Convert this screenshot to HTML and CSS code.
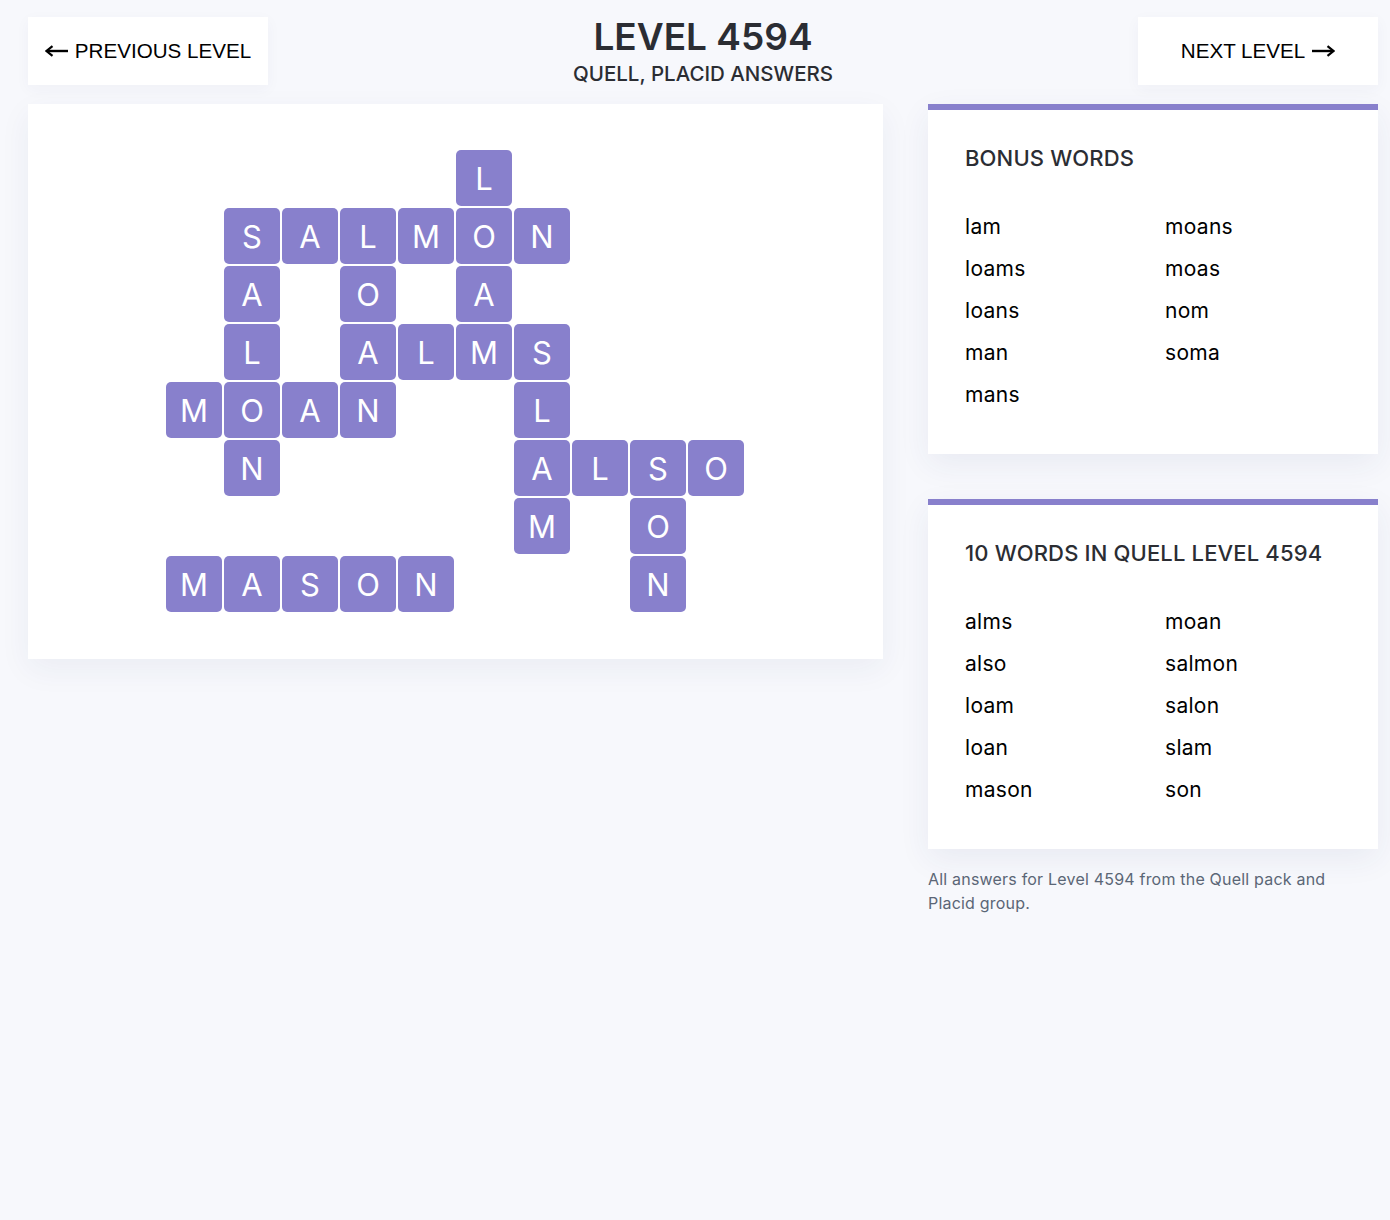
FILE: index.html
```html
<!DOCTYPE html>
<html lang="en">
<head>
<meta charset="utf-8">
<title>Level 4594 - Quell, Placid Answers</title>
<link rel="stylesheet" href="styles.css">
</head>
<body>
<div class="page">
  <header class="top">
    <a class="nav-btn" href="#">
      <svg class="arrow" width="23" height="12" viewBox="0 0 23 12" aria-hidden="true"><path d="M3 6H23" stroke="#000" stroke-width="2.4"/><path d="M7.5 1.2L1.5 6L7.5 10.8" fill="none" stroke="#000" stroke-width="2.2"/></svg>
      <span>PREVIOUS LEVEL</span>
    </a>
    <div class="title-block">
      <h1 class="title">LEVEL 4594</h1>
      <div class="subtitle">QUELL, PLACID ANSWERS</div>
    </div>
    <a class="nav-btn" href="#">
      <span>NEXT LEVEL</span>
      <svg class="arrow" width="23" height="12" viewBox="0 0 23 12" aria-hidden="true"><path d="M0 6H20" stroke="#000" stroke-width="2.4"/><path d="M15.5 1.2L21.5 6L15.5 10.8" fill="none" stroke="#000" stroke-width="2.2"/></svg>
    </a>
  </header>

  <main class="content">
    <section class="board-card">
      <div class="board">
        <div class="tile" style="grid-area:1/6">L</div>

        <div class="tile" style="grid-area:2/2">S</div>
        <div class="tile" style="grid-area:2/3">A</div>
        <div class="tile" style="grid-area:2/4">L</div>
        <div class="tile" style="grid-area:2/5">M</div>
        <div class="tile" style="grid-area:2/6">O</div>
        <div class="tile" style="grid-area:2/7">N</div>

        <div class="tile" style="grid-area:3/2">A</div>
        <div class="tile" style="grid-area:3/4">O</div>
        <div class="tile" style="grid-area:3/6">A</div>

        <div class="tile" style="grid-area:4/2">L</div>
        <div class="tile" style="grid-area:4/4">A</div>
        <div class="tile" style="grid-area:4/5">L</div>
        <div class="tile" style="grid-area:4/6">M</div>
        <div class="tile" style="grid-area:4/7">S</div>

        <div class="tile" style="grid-area:5/1">M</div>
        <div class="tile" style="grid-area:5/2">O</div>
        <div class="tile" style="grid-area:5/3">A</div>
        <div class="tile" style="grid-area:5/4">N</div>
        <div class="tile" style="grid-area:5/7">L</div>

        <div class="tile" style="grid-area:6/2">N</div>
        <div class="tile" style="grid-area:6/7">A</div>
        <div class="tile" style="grid-area:6/8">L</div>
        <div class="tile" style="grid-area:6/9">S</div>
        <div class="tile" style="grid-area:6/10">O</div>

        <div class="tile" style="grid-area:7/7">M</div>
        <div class="tile" style="grid-area:7/9">O</div>

        <div class="tile" style="grid-area:8/1">M</div>
        <div class="tile" style="grid-area:8/2">A</div>
        <div class="tile" style="grid-area:8/3">S</div>
        <div class="tile" style="grid-area:8/4">O</div>
        <div class="tile" style="grid-area:8/5">N</div>
        <div class="tile" style="grid-area:8/9">N</div>
      </div>
    </section>

    <aside class="sidebar">
      <section class="word-card">
        <h2 class="card-title">BONUS WORDS</h2>
        <ul class="word-list">
          <li>lam</li>
          <li>loams</li>
          <li>loans</li>
          <li>man</li>
          <li>mans</li>
          <li>moans</li>
          <li>moas</li>
          <li>nom</li>
          <li>soma</li>
        </ul>
      </section>
      <section class="word-card">
        <h2 class="card-title">10 WORDS IN QUELL LEVEL 4594</h2>
        <ul class="word-list">
          <li>alms</li>
          <li>also</li>
          <li>loam</li>
          <li>loan</li>
          <li>mason</li>
          <li>moan</li>
          <li>salmon</li>
          <li>salon</li>
          <li>slam</li>
          <li>son</li>
        </ul>
      </section>
      <p class="note">All answers for Level 4594 from the Quell pack and Placid group.</p>
    </aside>
  </main>
</div>
</body>
</html>
```

FILE: styles.css
```css
* {
  box-sizing: border-box;
}

html, body {
  margin: 0;
  padding: 0;
}

body {
  background: #f7f8fc;
  font-family: Inter, "Noto Sans", "Liberation Sans", sans-serif;
  color: #2b2d33;
}

.page {
  padding: 17px 12px 40px 28px;
}

.top {
  display: flex;
  align-items: center;
  justify-content: space-between;
  height: 68px;
  margin-bottom: 19px;
}

.nav-btn {
  width: 240px;
  height: 68px;
  background: #fff;
  display: flex;
  align-items: center;
  justify-content: center;
  gap: 7px;
  font-family: "Liberation Sans", Arial, sans-serif;
  font-size: 20.6px;
  color: #000;
  text-decoration: none;
  box-shadow: 0 4px 14px rgba(40, 50, 100, 0.04);
}

.arrow {
  display: block;
  flex: none;
}

.title-block {
  text-align: center;
  margin-top: -2px;
}

.title {
  margin: 0;
  font-size: 37px;
  line-height: 43px;
  font-weight: 600;
  color: #2b2d33;
}

.subtitle {
  margin-top: 4px;
  font-size: 20.5px;
  line-height: 24px;
  font-weight: 500;
  color: #2b2d33;
}

.content {
  display: grid;
  grid-template-columns: 1fr 450px;
  gap: 45px;
  align-items: start;
}

.board-card {
  background: #fff;
  height: 555px;
  padding: 0 1px 1px 0;
  display: flex;
  justify-content: center;
  align-items: center;
  box-shadow: 0 10px 30px rgba(40, 55, 110, 0.06);
}

.board {
  display: grid;
  grid-template-columns: repeat(10, 56px);
  grid-template-rows: repeat(8, 56px);
  gap: 2px;
}

.tile {
  background: #8880cc;
  border-radius: 5px;
  color: #fff;
  display: flex;
  align-items: center;
  justify-content: center;
  font-size: 31px;
  font-weight: 400;
}

.sidebar {
  display: flex;
  flex-direction: column;
}

.word-card {
  background: #fff;
  border-top: 6px solid #8880cc;
  height: 350px;
  padding: 34px 37px 0;
  margin-bottom: 45px;
  box-shadow: 0 10px 30px rgba(40, 55, 110, 0.07);
}

.word-card + .word-card {
  margin-bottom: 18px;
}

.card-title {
  margin: 0;
  font-size: 22px;
  line-height: 28px;
  font-weight: 500;
  letter-spacing: 0.15px;
  color: #2b2d33;
}

.word-list {
  list-style: none;
  margin: 34px 0 0;
  padding: 0;
  display: grid;
  grid-template-columns: 200px 200px;
  grid-template-rows: repeat(5, 42px);
  grid-auto-flow: column;
}

.word-list li {
  font-size: 21px;
  line-height: 42px;
  letter-spacing: 0.3px;
  color: #000;
}

.note {
  margin: 0;
  max-width: 425px;
  font-size: 16px;
  line-height: 24px;
  letter-spacing: 0.2px;
  color: #5b6676;
}
```
